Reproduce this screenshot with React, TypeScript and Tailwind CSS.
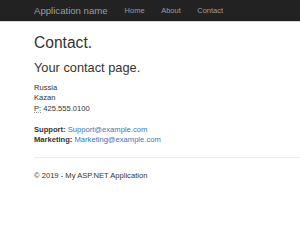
export default function App() {
  return (
    <div className="min-h-screen bg-white font-['Liberation_Sans',Arial,sans-serif] text-[#333]">
      <nav className="flex h-[22px] items-center border-b border-[#d6d6d6] bg-[#222] pl-[34px]">
        <span className="text-[9.6px] leading-none text-[#9d9d9d]">Application name</span>
        <div className="ml-[17px] flex gap-[16.5px] text-[7.5px] leading-none text-[#9d9d9d]">
          <span>Home</span>
          <span>About</span>
          <span>Contact</span>
        </div>
      </nav>

      <main className="pl-[34px]">
        <h2 className="mt-[11.5px] text-[15.6px] leading-[17px]">Contact.</h2>
        <h3 className="mt-[10.5px] text-[12.8px] leading-[14px]">Your contact page.</h3>

        <address className="mt-[7.5px] text-[7.6px] not-italic leading-[10.6px]">
          Russia
          <br />
          Kazan
          <br />
          <abbr title="Phone" className="underline decoration-dotted decoration-[#999]">P:</abbr> 425.555.0100
        </address>

        <address className="mt-[10.6px] text-[7.6px] not-italic leading-[10.6px]">
          <strong>Support:</strong> <a className="text-[#337ab7]">Support@example.com</a>
          <br />
          <strong>Marketing:</strong> <a className="text-[#337ab7]">Marketing@example.com</a>
        </address>

        <hr className="mt-[10.6px] border-[#eee]" />
        <footer className="mt-[13.5px] text-[7.6px] leading-[10.6px]">
          <p>© 2019 - My ASP.NET Application</p>
        </footer>
      </main>
    </div>
  );
}
